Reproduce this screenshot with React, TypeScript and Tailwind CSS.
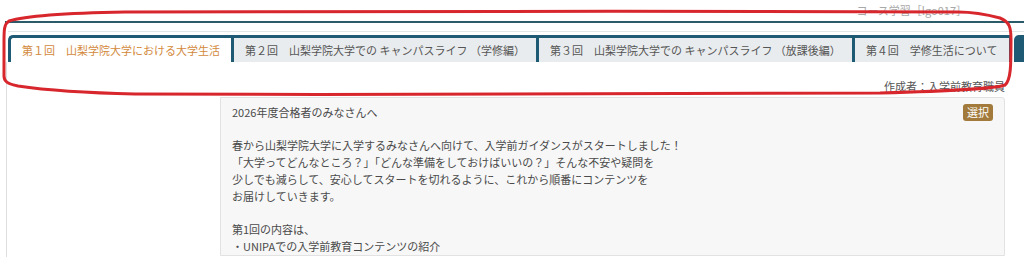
import React from 'react';

const tabs = [
    '第１回　山梨学院大学における大学生活',
    '第２回　山梨学院大学での キャンパスライフ （学修編）',
    '第３回　山梨学院大学での キャンパスライフ （放課後編）',
    '第４回　学修生活について',
];

const bodyLines = [
    '春から山梨学院大学に入学するみなさんへ向けて、入学前ガイダンスがスタートしました！',
    '「大学ってどんなところ？」「どんな準備をしておけばいいの？」そんな不安や疑問を',
    '少しでも減らして、安心してスタートを切れるように、これから順番にコンテンツを',
    'お届けしていきます。',
];

const RedMark = () => (
    <svg className="absolute inset-0 pointer-events-none" width="1024" height="257" viewBox="0 0 1024 257" fill="none">
        <path
            d="M958 12 C700 11 320 11 125 12 C70 13 25 16 9 21 C4 24 4 30 4 42 L4 76 C4 81 7 84 18 86 C45 90 90 93 135 94 C400 95 700 94 880 93 C950 91 995 89 1005 85 C1011 80 1011 65 1011 40 C1011 28 1010 22 1000 18 C985 14 970 12 958 12"
            stroke="#d8262d"
            strokeWidth={3}
            strokeLinecap="round"
            strokeLinejoin="round"
        />
    </svg>
);

export default function App() {
    return (
        <div className="relative w-[1024px] h-[257px] overflow-hidden bg-white font-['Noto_Sans_CJK_JP','Noto_Sans',sans-serif] text-[11px]">
            <div className="h-[21px] flex items-center justify-end pr-[57px] text-[#a8a8a8] leading-[21px]">
                コース学習［lgo017］
            </div>
            <div className="ml-[5px] h-[2px] bg-[#2b5a68]" />
            <div className="ml-[8px] mt-[8px] h-px bg-[#dfe4e7]" />

            {/* tab strip */}
            <div className="mt-[3px] ml-[8px] flex h-[27px]">
                {tabs.map((t, i) => (
                    <div
                        key={t}
                        className={
                            i === 0
                                ? 'flex items-center px-[11px] border-t-[3px] border-l-[3px] border-[#1f5a74] rounded-tl-[5px] bg-white text-[#d3893c] whitespace-nowrap'
                                : i === tabs.length - 1
                                ? 'flex items-center px-[11px] border-t-[3px] border-x-[3px] border-[#1f5a74] bg-[#e9ecee] text-[#555] whitespace-nowrap'
                                : 'flex items-center px-[11px] border-t-[3px] border-l-[3px] border-[#1f5a74] bg-[#e9ecee] text-[#555] whitespace-nowrap'
                        }
                    >
                        {t}
                    </div>
                ))}
                <div className="ml-[2px] flex-1 bg-[#1f5a74] rounded-tl-[5px]" />
            </div>

            {/* content panel */}
            <div className="ml-[6px] border-l border-[#dedede] pt-[16px] h-[200px]">
                <div className="h-[17px] leading-[17px] text-right pr-[19px] text-[#555]">作成者：入学前教育職員</div>
                <div className="mt-[2px] flex">
                    <div className="w-[213px] shrink-0" />
                    <div className="flex-1 mr-[19px] border border-[#e2e2e2] rounded-tr-[3px] bg-[#f7f7f7] pt-[6px] pl-[11px] pr-[11px] text-[#4a4a4a] leading-[17px]">
                        <div className="flex items-center justify-between">
                            <span>2026年度合格者のみなさんへ</span>
                            <span className="px-[4px] h-[17px] leading-[17px] rounded-[3px] bg-[#a27b3c] text-white">選択</span>
                        </div>
                        <div className="h-[16px]" />
                        {bodyLines.map((l) => (
                            <div key={l}>{l}</div>
                        ))}
                        <div className="h-[16px]" />
                        <div>第1回の内容は、</div>
                        <div>・UNIPAでの入学前教育コンテンツの紹介</div>
                    </div>
                </div>
            </div>

            <RedMark />
        </div>
    );
}
